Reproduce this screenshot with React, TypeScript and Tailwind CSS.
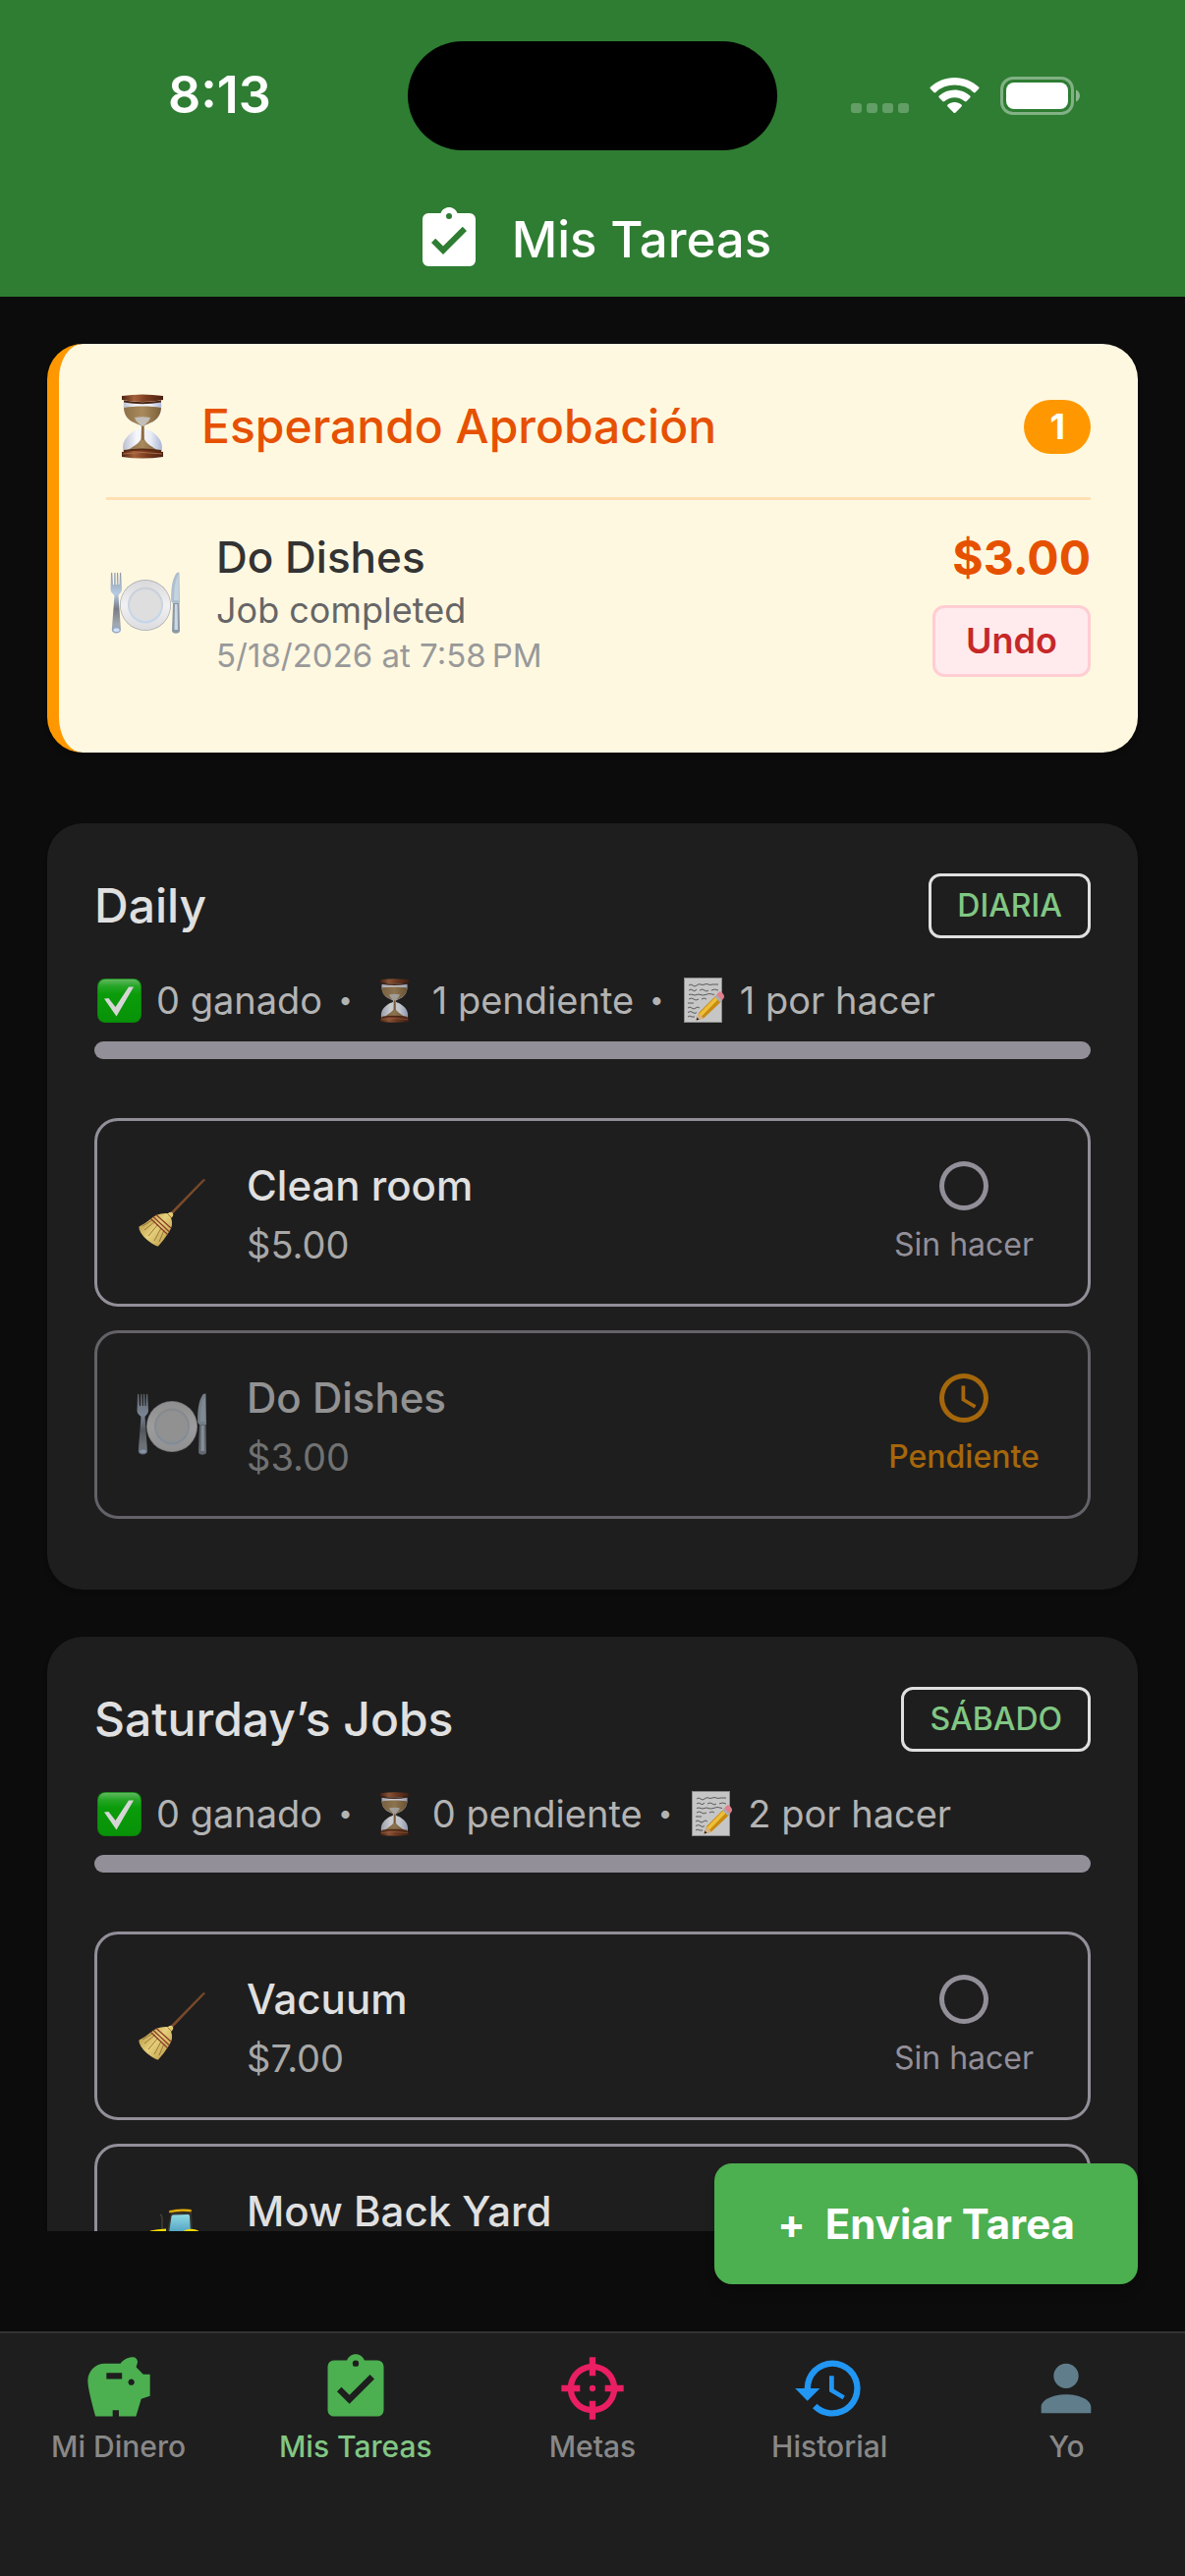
import type { ReactNode } from "react";

type IconProps = { className?: string };

function Glyph({ d, className }: { d: string; className?: string }) {
  return (
    <svg viewBox="0 0 24 24" fill="currentColor" fillRule="evenodd" className={className} aria-hidden="true">
      <path d={d} />
    </svg>
  );
}

const CLIPBOARD_CHECK =
  "M10 17L6 13L7.41 11.59L10 14.17L16.59 7.58L18 9M12 3A1 1 0 0 1 13 4A1 1 0 0 1 12 5A1 1 0 0 1 11 4A1 1 0 0 1 12 3M19 3H14.82C14.4 1.84 13.3 1 12 1C10.7 1 9.6 1.84 9.18 3H5A2 2 0 0 0 3 5V19A2 2 0 0 0 5 21H19A2 2 0 0 0 21 19V5A2 2 0 0 0 19 3Z";
const PIGGY_BANK =
  "M19.83 7.5L17.56 5.23C17.63 4.81 17.74 4.42 17.88 4.08C17.96 3.9 18 3.71 18 3.5C18 2.67 17.33 2 16.5 2C14.86 2 13.41 2.79 12.5 4H7.5C4.46 4 2 6.46 2 9.5S4.5 21 4.5 21H10V19H12V21H17.5L19.18 15.41L22 14.47V7.5H19.83M13 9H8V7H13V9M16 11C15.45 11 15 10.55 15 10C15 9.45 15.45 9 16 9C16.55 9 17 9.45 17 10C17 10.55 16.55 11 16 11Z";
const TARGET =
  "M11 2V4.07C7.38 4.53 4.53 7.38 4.07 11H2V13H4.07C4.53 16.62 7.38 19.47 11 19.93V22H13V19.93C16.62 19.47 19.47 16.62 19.93 13H22V11H19.93C19.47 7.38 16.62 4.53 13 4.07V2M11 6.08V8H13V6.09C15.5 6.5 17.5 8.5 17.92 11H16V13H17.91C17.5 15.5 15.5 17.5 13 17.92V16H11V17.91C8.5 17.5 6.5 15.5 6.08 13H8V11H6.09C6.5 8.5 8.5 6.5 11 6.08M12 11A1 1 0 0 0 11 12A1 1 0 0 0 12 13A1 1 0 0 0 13 12A1 1 0 0 0 12 11Z";
const HISTORY =
  "M13.5 8H12V13L16.28 15.54L17 14.33L13.5 12.25V8M13 3A9 9 0 0 0 4 12H1L4.96 16.03L9 12H6A7 7 0 0 1 13 5A7 7 0 0 1 20 12A7 7 0 0 1 13 19C11.07 19 9.32 18.21 8.06 16.94L6.64 18.36C8.27 20 10.5 21 13 21A9 9 0 0 0 22 12A9 9 0 0 0 13 3";
const ACCOUNT =
  "M12 4A4 4 0 0 1 16 8A4 4 0 0 1 12 12A4 4 0 0 1 8 8A4 4 0 0 1 12 4M12 14C16.42 14 20 15.79 20 18V20H4V18C4 15.79 7.58 14 12 14Z";
const CIRCLE_OUTLINE =
  "M12 20A8 8 0 0 1 4 12A8 8 0 0 1 12 4A8 8 0 0 1 20 12A8 8 0 0 1 12 20M12 2A10 10 0 0 0 2 12A10 10 0 0 0 12 22A10 10 0 0 0 22 12A10 10 0 0 0 12 2Z";
const CLOCK_OUTLINE =
  "M12 20A8 8 0 0 0 20 12A8 8 0 0 0 12 4A8 8 0 0 0 4 12A8 8 0 0 0 12 20M12 2A10 10 0 0 1 22 12A10 10 0 0 1 12 22C6.47 22 2 17.5 2 12A10 10 0 0 1 12 2M12.5 7V12.25L17 14.92L16.25 16.15L11 13V7H12.5Z";

function Hourglass({ className }: IconProps) {
  return (
    <svg viewBox="0 0 44 66" className={className} aria-hidden="true">
      <defs>
        <linearGradient id="hgWood" x1="0" x2="1" y1="0" y2="0">
          <stop offset="0" stopColor="#4f2412" />
          <stop offset=".3" stopColor="#a4603a" />
          <stop offset=".6" stopColor="#7a3c1f" />
          <stop offset="1" stopColor="#4a2010" />
        </linearGradient>
        <linearGradient id="hgGlass" x1="0" x2="1" y1="0" y2="0">
          <stop offset="0" stopColor="#b9bfd0" />
          <stop offset=".35" stopColor="#f7f8fc" />
          <stop offset=".7" stopColor="#ebeef7" />
          <stop offset="1" stopColor="#aab6d6" />
        </linearGradient>
        <linearGradient id="hgSand" x1="0" x2="1" y1="0" y2="0">
          <stop offset="0" stopColor="#8f7148" />
          <stop offset=".5" stopColor="#a98a5e" />
          <stop offset="1" stopColor="#7d6039" />
        </linearGradient>
      </defs>
      <path d="M3 8C2 17 4 24 12 29C17 31.500 20 32 20 34C20 36 14 36 9 41C3 46 1 52 2.500 59H41.500C43 52 41 46 35 41C30 36 24 36 24 34C24 32 27 31.500 32 29C40 24 42 17 41 8Z" fill="url(#hgGlass)" />
      <path d="M3 14C3.500 21 6 25 12 28.500C17 31 20 31.500 21 33H23.500C24 31.500 27 31 32 28.500C38 25 40.500 21 41 14C30 12 14 12 3 14Z" fill="url(#hgSand)" />
      <path d="M14 24C19 23 25 23 30 24C29 28 26 30 23 32.500H21C18 30 15 28 14 24Z" fill="#c9ccd0" opacity=".8" />
      <path d="M21 33H23.500L24 46C26 51 33 54 38 58H6C11 54 18 51 20.500 46Z" fill="url(#hgSand)" />
      <path d="M21 33H23.500L23.200 47H21.200Z" fill="#8d6a40" />
      <path d="M1 2Q22 -1 43 2V6Q22 10 1 6Z" fill="url(#hgWood)" />
      <path d="M3 6.500Q22 10 41 6.500V8.500Q22 12 3 8.500Z" fill="#4a2412" />
      <path d="M3 57Q22 54 41 57V59H3Z" fill="#5a2a15" />
      <path d="M1 59Q22 56 43 59V64Q22 67 1 64Z" fill="url(#hgWood)" />
      <path d="M2 61Q22 58 42 61" stroke="#b87850" strokeWidth=".8" fill="none" />
    </svg>
  );
}

function Plate({ className }: IconProps) {
  return (
    <svg viewBox="0 0 72 64" className={className} aria-hidden="true">
      <defs>
        <linearGradient id="plRim" x1="0" x2="0" y1="0" y2="1">
          <stop offset="0" stopColor="#d9d9db" />
          <stop offset=".5" stopColor="#f1f1f3" />
          <stop offset="1" stopColor="#dcdcdf" />
        </linearGradient>
        <linearGradient id="plSteel" x1="0" x2="0" y1="0" y2="1">
          <stop offset="0" stopColor="#8d97a3" />
          <stop offset=".35" stopColor="#b6cbe4" />
          <stop offset=".6" stopColor="#777c84" />
          <stop offset=".85" stopColor="#a2a8b0" />
          <stop offset="1" stopColor="#8fa7c2" />
        </linearGradient>
      </defs>
      <circle cx="36" cy="34" r="26" fill="#a7aaae" />
      <circle cx="36" cy="34" r="25.300" fill="url(#plRim)" />
      <circle cx="36" cy="33.500" r="18" fill="#cfd0d3" />
      <circle cx="36" cy="35" r="17.500" fill="#c5d6ea" />
      <circle cx="36" cy="34" r="16" fill="#dedede" />
      <path d="M1 1.500C1 .5 2.200.5 2.300 1.500L3 13H4L4.300 1.500C4.300.5 5.500.5 5.500 1.500L5.800 13H6.800L7 1.500C7 .5 8.200.5 8.200 1.500L8.600 13H9.500L10 1.500C10 .5 11.200.5 11.200 1.500L12 18C12 21 9.500 22.500 8.500 24L11 59C11.200 63.500 1.600 63.500 1.800 59L4.500 24C3 22.500.5 21 .5 18Z" fill="url(#plSteel)" />
      <rect x="3.500" y="57.500" width="6" height="3.500" rx="1.700" fill="#cfe2f7" />
      <path d="M70.500 2C71 0 68 0 66.500 3C63 9 62 18 62.200 29C62.200 31 63.500 32 64.500 32H71Z" fill="#aebfce" />
      <path d="M69.500 3C66.500 8 65 17 65 29H70Z" fill="#c3d3e0" />
      <path d="M64 32H70.500L71 60C71 63.500 63 63.500 63 60Z" fill="#8d99a6" />
      <path d="M66 33H68.500L69 59H65.500Z" fill="#cdd8e4" />
    </svg>
  );
}

function Broom({ className }: IconProps) {
  return (
    <svg viewBox="0 0 68 69" className={className} aria-hidden="true">
      <defs>
        <linearGradient id="brStraw" x1=".1" y1=".1" x2=".9" y2=".8">
          <stop offset="0" stopColor="#b59440" />
          <stop offset=".5" stopColor="#e6cf7c" />
          <stop offset="1" stopColor="#c2a04c" />
        </linearGradient>
      </defs>
      <path d="M67.500 1L34 36L32.500 34.500L66 .5Z" fill="#7b4a2a" stroke="#7b4a2a" strokeWidth="1" />
      <path d="M30 35Q33 32.500 35 35Q36 38 33 39.500Q36 47 31 54Q26 62 20 68.500C18 69 9 63 6 59.500C3 56 0 52 .5 48.500Q6 46 12 41Q19 34 30 35Z" fill="url(#brStraw)" />
      <path d="M6 52L17 43M10 58L20 46M16 63L23 50M21 64L26 52M4 48L14 42" stroke="#8f7230" strokeWidth=".9" fill="none" />
      <path d="M18 36.500L33 50M15 38.500L31 53.500M12.500 40.500L29.500 56.500" stroke="#8a3b28" strokeWidth="1.200" fill="none" />
      <path d="M29.500 35.500L33.500 39.500" stroke="#a07a2e" strokeWidth="1" />
    </svg>
  );
}

function Tractor({ className }: IconProps) {
  return (
    <svg viewBox="0 0 72 66" className={className} aria-hidden="true">
      <defs>
        <linearGradient id="trGlass" x1="0" x2="0" y1="0" y2="1">
          <stop offset="0" stopColor="#8edbe4" />
          <stop offset="1" stopColor="#4f9fc0" />
        </linearGradient>
      </defs>
      <path d="M24 9Q26 10 26 13V24" stroke="#45403a" strokeWidth="1.400" fill="none" />
      <path d="M35 7L56 6L57 28H31Z" fill="#35332e" />
      <path d="M37 9.500Q36 9.500 35.500 11L33 28H55L54 10.500Q54 9 52.500 9Z" fill="url(#trGlass)" />
      <path d="M33 5Q46 2 56 4V6.500Q46 5 33 7.500Z" fill="#f0b80a" stroke="#3a3010" strokeWidth=".6" />
      <path d="M14 25.500Q21 24 30 23.500V28H44Q54 21 63 25.500L66 42H14Z" fill="#f7dc00" />
      <circle cx="54" cy="46" r="17" fill="#2b2b2b" />
      <circle cx="54" cy="46" r="8" fill="#f5d400" />
      <circle cx="18" cy="53" r="11" fill="#2b2b2b" />
      <circle cx="18" cy="53" r="5" fill="#f5d400" />
    </svg>
  );
}

function CheckMark({ className }: IconProps) {
  return (
    <svg viewBox="0 0 45 45" className={className} aria-hidden="true">
      <defs>
        <linearGradient id="ckGreen" x1="0" x2="0" y1="0" y2="1">
          <stop offset="0" stopColor="#62b862" />
          <stop offset=".16" stopColor="#27a627" />
          <stop offset=".35" stopColor="#0a9c0a" />
          <stop offset="1" stopColor="#089208" />
        </linearGradient>
      </defs>
      <rect width="45" height="45" rx="8" fill="#0b7f0b" />
      <rect x=".8" y=".8" width="43.400" height="43.400" rx="7.500" fill="url(#ckGreen)" />
      <path d="M7 20.500L11.500 20L18.500 29L32 8.500H37L19.500 38.500Z" fill="#d6d6d6" />
    </svg>
  );
}

function Memo({ className }: IconProps) {
  return (
    <svg viewBox="0 0 41 46" className={className} aria-hidden="true">
      <rect width="39" height="46" fill="#8a8a8a" />
      <rect x="1" y="1" width="37" height="44" fill="#c6c6c6" />
      <path
        d="M5 8q2-2 4 0t4 0t4-1t4 0t4 0t4 0h6M5 13q2-2 4 0t4-1m3 1q3-2 5 0t4 0m3 0q3-2 7 0M5 17.500q2-1 4 0t4 0t4 0t5 0t4-1t5 1M5 22q3-2 5 0t5 0m3 0q3-2 5 0M4 26h6M4 31q2-2 4 0t4 0t4 0M4 35.500q3-2 5 0t4 0M4 40q2-2 4 0h3"
        stroke="#5b5b5b"
        strokeWidth="1"
        fill="none"
      />
      <path d="M12.500 43.500L15 36L33 18L38.500 24L20 41.500Z" fill="#c98a10" />
      <path d="M15.500 37L33.500 18.500L36 21L18 39.500Z" fill="#eec03a" />
      <path d="M15 36L20 41.500L12.500 43.500Z" fill="#d9b182" />
      <path d="M12.500 43.500L13.500 40.500L15.500 42.700Z" fill="#222" />
      <path d="M31 19.500L33 17.500L39 23.500L37 25.500Z" fill="#a9adb2" />
      <path d="M33 17.500L35.500 15Q37 13.500 39 15.500L40.500 17.500Q41.500 19.500 40.500 21L38.800 23.300Z" fill="#e0808c" />
    </svg>
  );
}

function StatusBar() {
  return (
    <div className="relative grid h-[194px] grid-cols-3 items-center">
      <time className="justify-self-start pl-[171px] text-[52px] leading-none font-semibold">8:13</time>
      <div className="h-[111px] w-[376px] justify-self-center rounded-full bg-black" />
      <div className="flex items-center justify-end gap-[21px] pr-[106px]">
        <svg viewBox="0 0 59 38" className="h-[38px] w-[59px]" fill="#fff" opacity=".25" aria-hidden="true">
          <rect x="0" y="27" width="11" height="10" rx="3" />
          <rect x="16" y="27" width="11" height="10" rx="3" />
          <rect x="32" y="27" width="11" height="10" rx="3" />
          <rect x="48" y="27" width="11" height="10" rx="3" />
        </svg>
        <svg viewBox="0 0 51 37" className="h-[37px] w-[51px]" fill="#fff" aria-hidden="true">
          <path d="M25.500 0C35 0 43.500 3.600 50 9.600Q51 10.600 50 11.600L46.600 15Q45.700 15.900 44.700 15A28 28 0 0 0 6.300 15Q5.300 15.900 4.400 15L1 11.600Q0 10.600 1 9.600C7.500 3.600 16 0 25.500 0Z" />
          <path d="M25.500 12.500C31.500 12.500 37 14.800 41.200 18.600Q42.200 19.600 41.200 20.600L37.700 24Q36.800 24.900 35.700 24A15.500 15.500 0 0 0 15.300 24Q14.200 24.900 13.300 24L9.800 20.600Q8.800 19.600 9.800 18.600C14 14.800 19.500 12.500 25.500 12.500Z" />
          <path d="M25.500 25C28.200 25 30.600 26 32.500 27.600Q33.500 28.600 32.500 29.600L26.600 35.500Q25.500 36.600 24.400 35.500L18.500 29.600Q17.500 28.600 18.500 27.600C20.400 26 22.800 25 25.500 25Z" />
        </svg>
        <svg viewBox="0 0 82 39" className="h-[39px] w-[82px]" aria-hidden="true">
          <rect x="1.500" y="1.500" width="72" height="36" rx="11.500" fill="none" stroke="#fff" strokeWidth="3" opacity=".4" />
          <rect x="6" y="6" width="63" height="27" rx="8" fill="#fff" />
          <path d="M77 13.500C79.600 14.600 81 17 81 19.500S79.600 24.400 77 25.500Z" fill="#fff" opacity=".45" />
        </svg>
      </div>
    </div>
  );
}

function PendingCard() {
  return (
    <section className="rounded-[36px] border-l-12 border-[#ff9800] bg-[#fff8e1] p-12 shadow-md">
      <div className="box-content flex h-27 items-start border-b-3 border-[#ffe0b2]">
        <div className="flex h-18 w-full items-center gap-6">
          <span className="flex w-[73px] justify-center">
            <Hourglass className="h-[66px] w-11" />
          </span>
          <h2 className="flex-1 text-[48px] leading-[60px] font-medium text-[#e65100]">Esperando Aprobación</h2>
          <span className="rounded-full bg-[#ff9800] px-[26px] text-[36px] leading-[55px] font-bold text-white">1</span>
        </div>
      </div>
      <div className="flex items-center gap-8 py-7">
        <span className="flex w-20 justify-center">
          <Plate className="h-16 w-18" />
        </span>
        <div className="flex-1">
          <h3 className="text-[44px] leading-[60px] font-medium text-[#333]">Do Dishes</h3>
          <p className="text-[36px] leading-[48px] text-[#666]">Job completed</p>
          <p className="text-[33px] leading-[45px] text-[#999]">5/18/2026 at 7:58&#8239;PM</p>
        </div>
        <div className="flex flex-col items-end gap-[18px]">
          <span className="text-[48px] leading-[60px] font-bold text-[#e65100]">$3.00</span>
          <button
            type="button"
            className="rounded-xl border-3 border-[#ffcdd2] bg-[#ffebee] px-[31px] py-2.5 text-[36px] leading-[47px] font-semibold text-[#c62828]"
          >
            Undo
          </button>
        </div>
      </div>
    </section>
  );
}

type Status = "todo" | "pending";
type Task = { name: string; price?: string; icon: ReactNode; status?: Status };

const STATUS = {
  todo: { label: "Sin hacer", d: CIRCLE_OUTLINE, color: "text-[#938f99]", weight: "" },
  pending: { label: "Pendiente", d: CLOCK_OUTLINE, color: "text-[#ff9800]", weight: "font-medium" },
};

function StatusColumn({ status }: { status: Status }) {
  const { label, d, color, weight } = STATUS[status];
  return (
    <span className={color}>
      <span className="flex min-w-[180px] flex-col items-center gap-1.5 text-[32px] leading-[48px]">
        <Glyph d={d} className="size-15" />
        <span className={weight}>{label}</span>
      </span>
    </span>
  );
}

function TaskRow({ name, price, icon, status }: Task) {
  return (
    <li className={status === "pending" ? "opacity-60" : ""}>
      <button
        type="button"
        className="mb-6 flex w-full items-center gap-9 rounded-3xl border-3 border-[#938f99] p-9 text-left"
      >
        <span className="flex w-20 justify-center">{icon}</span>
        <span className="flex flex-1 flex-col gap-1.5">
          <span className="text-[42px] leading-[60px] font-medium text-[#e0e0e0]">{name}</span>
          <span className="h-12 text-[38px] leading-[48px] text-[#a8a8a8]">{price}</span>
        </span>
        {status && <StatusColumn status={status} />}
      </button>
    </li>
  );
}

type GroupProps = { title: string; badge: string; earned: number; pending: number; todo: number; tasks: Task[] };

function TaskGroup({ title, badge, earned, pending, todo, tasks }: GroupProps) {
  return (
    <section className="rounded-[36px] bg-[#1e1e1e] p-12 shadow-md">
      <div className="flex h-18 items-center justify-between">
        <h2 className="text-[48px] leading-[60px] font-medium text-[#e0e0e0]">{title}</h2>
        <span className="rounded-xl border-3 border-[#e0e0e0] px-[26px] py-1.5 text-[32px] leading-[48px] font-medium text-[#81c784]">
          {badge}
        </span>
      </div>
      <div className="mt-9 flex items-center gap-3 text-[38px] leading-[48px] text-[#b3b3b3]">
        <CheckMark className="mx-[3px] size-[45px]" />
        <span>{earned} ganado</span>
        <span className="mx-1 text-[26px]">•</span>
        <Hourglass className="mx-2.5 h-[45px] w-[33px] opacity-80" />
        <span>{pending} pendiente</span>
        <span className="mx-1 text-[26px]">•</span>
        <Memo className="mx-1 h-[46px] w-[41px]" />
        <span>{todo} por hacer</span>
      </div>
      <div className="mt-[18px] h-[18px] rounded-full bg-[#938f99]" />
      <ul className="mt-15">
        {tasks.map((t) => (
          <TaskRow key={t.name} {...t} />
        ))}
      </ul>
    </section>
  );
}

const BROOM = <Broom className="h-[69px] w-[68px]" />;

const TABS = [
  { label: "Mi Dinero", d: PIGGY_BANK, color: "text-[#4caf50]" },
  { label: "Mis Tareas", d: CLIPBOARD_CHECK, color: "text-[#4caf50]", active: true },
  { label: "Metas", d: TARGET, color: "text-[#e91e63]" },
  { label: "Historial", d: HISTORY, color: "text-[#2196f3]" },
  { label: "Yo", d: ACCOUNT, color: "text-[#607d8b]" },
];

export default function App() {
  return (
    <div className="flex h-screen flex-col bg-[#0c0c0c] font-['Inter',sans-serif]">
      <header className="bg-[#2e7d32] pb-[22px] text-white">
        <StatusBar />
        <div className="flex h-[86px] items-end justify-center gap-7">
          <Glyph d={CLIPBOARD_CHECK} className="size-18" />
          <h1 className="text-[51px] leading-[72px] font-medium">Mis Tareas</h1>
        </div>
      </header>

      <main className="relative flex min-h-0 flex-1 flex-col pb-[102px]">
        <div className="min-h-0 flex-1 overflow-y-auto px-12 pt-12 [scrollbar-width:none]">
          <PendingCard />
          <div className="mt-18 flex flex-col gap-12">
            <TaskGroup
              title="Daily"
              badge="DIARIA"
              earned={0}
              pending={1}
              todo={1}
              tasks={[
                { name: "Clean room", price: "$5.00", icon: BROOM, status: "todo" },
                { name: "Do Dishes", price: "$3.00", icon: <Plate className="h-16 w-18" />, status: "pending" },
              ]}
            />
            <TaskGroup
              title="Saturday’s Jobs"
              badge="SÁBADO"
              earned={0}
              pending={0}
              todo={2}
              tasks={[
                { name: "Vacuum", price: "$7.00", icon: BROOM, status: "todo" },
                { name: "Mow Back Yard", icon: <Tractor className="h-[66px] w-18" /> },
              ]}
            />
          </div>
        </div>
        <button
          type="button"
          className="absolute right-12 bottom-12 flex h-[123px] items-center gap-5 rounded-[18px] bg-[#4caf50] px-16 text-[42px] font-bold text-white shadow-lg"
        >
          <span>+</span>
          <span>Enviar Tarea</span>
        </button>
      </main>

      <nav className="grid h-[249px] shrink-0 grid-cols-5 items-start border-t-2 border-[#333] bg-[#1e1e1e] pt-[18px]">
        {TABS.map((t) => (
          <a key={t.label} href="#" className="flex flex-col items-center" aria-current={t.active ? "page" : undefined}>
            <span className={t.color}>
              <Glyph d={t.d} className="size-19" />
            </span>
            <span
              className={
                t.active
                  ? "text-[30px] leading-[42px] font-medium text-[#81c784]"
                  : "text-[30px] leading-[42px] font-medium text-[#888]"
              }
            >
              {t.label}
            </span>
          </a>
        ))}
      </nav>
    </div>
  );
}
